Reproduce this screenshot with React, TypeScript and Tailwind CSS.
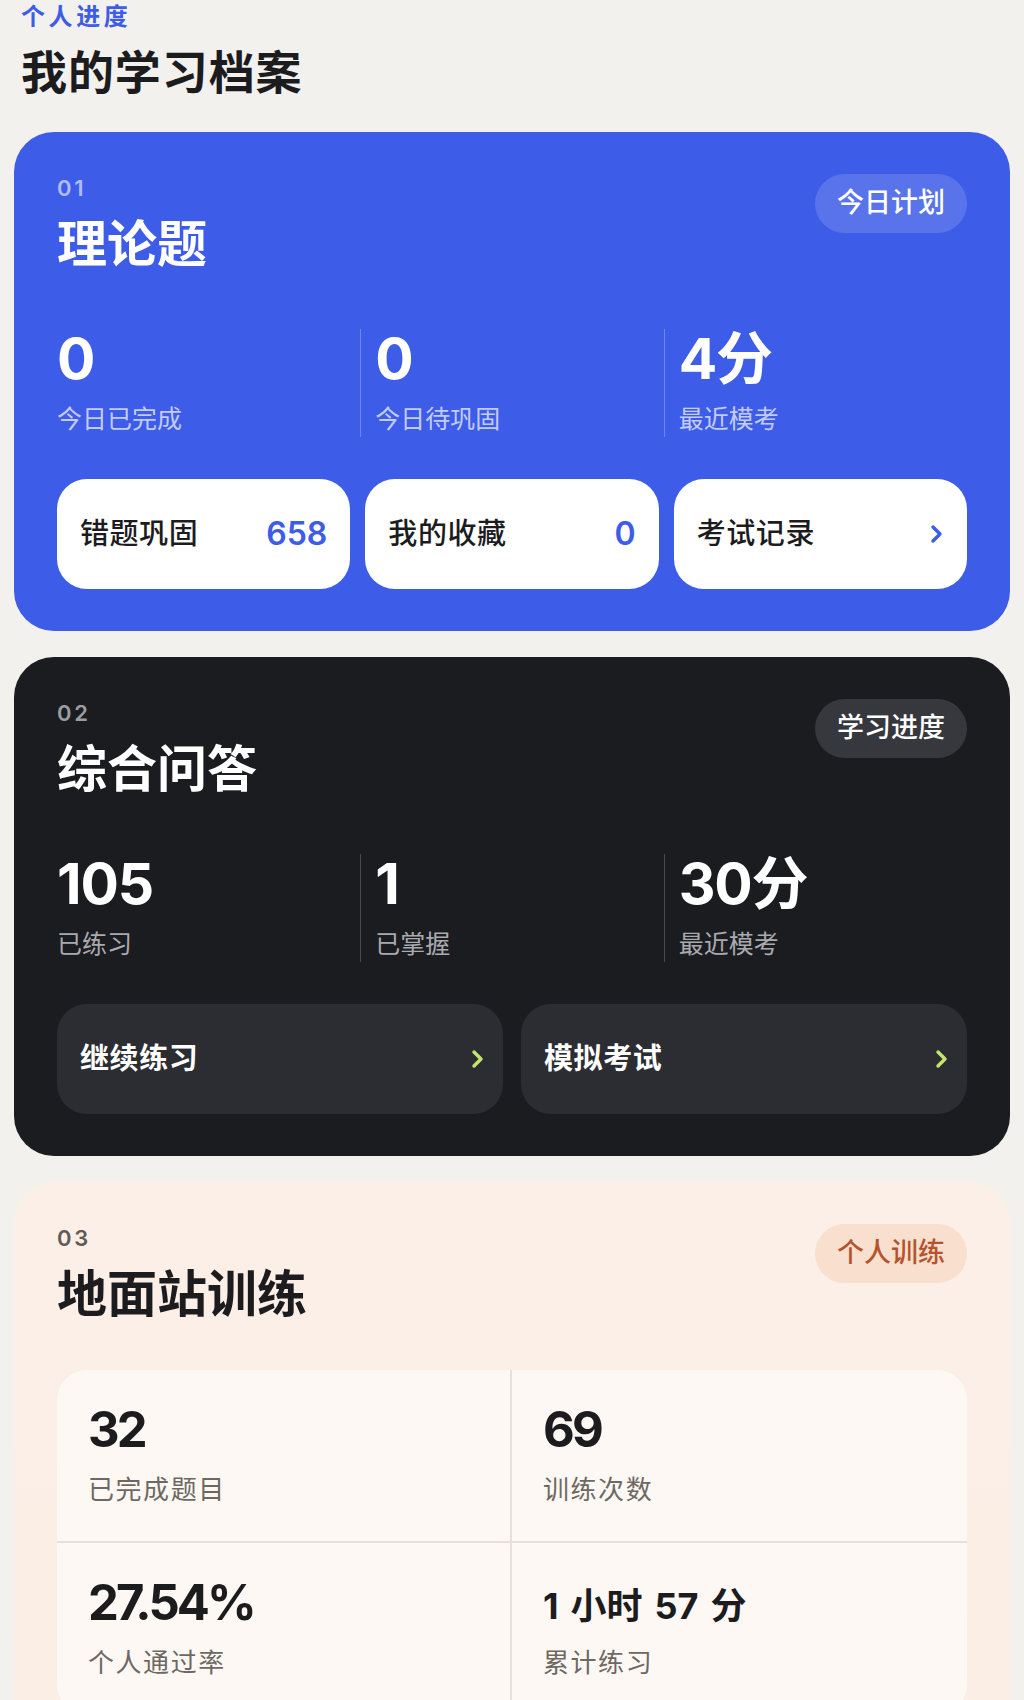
import type { ReactNode } from "react";

const font = { fontFamily: "Inter, 'Noto Sans CJK SC', sans-serif" };

function Chevron({ color }: { color: string }) {
  return (
    <svg width="16" height="26" viewBox="0 0 16 26" fill="none">
      <path d="M5 6l7 7-7 7" stroke={color} strokeWidth="3.4" strokeLinecap="round" strokeLinejoin="round" />
    </svg>
  );
}

type Stat = { value: string; label: string };

function StatRow({ stats, dark }: { stats: Stat[]; dark?: boolean }) {
  return (
    <div className="mt-[57px] grid grid-cols-3">
      {stats.map((s, i) => (
        <div
          key={i}
          className={
            i === 0
              ? "pb-[2px]"
              : dark
              ? "border-l border-white/20 pl-[14px] pb-[2px]"
              : "border-l border-white/25 pl-[14px] pb-[2px]"
          }
        >
          <div className="text-[57px] font-bold leading-[60px] text-white tracking-[-0.02em]">{s.value}</div>
          <div className={dark ? "mt-[14px] text-[25px] leading-[32px] text-[#a9aaaf]" : "mt-[14px] text-[25px] leading-[32px] text-white/70"}>
            {s.label}
          </div>
        </div>
      ))}
    </div>
  );
}

function CardHead({ num, title, badge, numClass, titleClass, badgeClass }: {
  num: string;
  title: string;
  badge: string;
  numClass: string;
  titleClass: string;
  badgeClass: string;
}) {
  return (
    <div className="flex items-start justify-between">
      <div>
        <div className={"text-[22px] font-semibold leading-[24px] tracking-[0.12em] " + numClass}>{num}</div>
        <div className={"mt-4 text-[50px] font-bold leading-[56px] " + titleClass}>{title}</div>
      </div>
      <div className={"-mt-[2px] flex h-[59px] items-center rounded-full px-[22px] text-[27px] font-medium " + badgeClass}>
        {badge}
      </div>
    </div>
  );
}

function Card({ className, children }: { className: string; children: ReactNode }) {
  return <div className={"rounded-[40px] px-[43px] pt-[44px] pb-[42px] " + className}>{children}</div>;
}

export default function App() {
  return (
    <div className="min-h-screen bg-[#f2f1ee] px-[14px] pb-10" style={font}>
      <div className="px-[7px] pt-[2px]">
        <div className="text-[24px] font-semibold leading-[30px] tracking-[0.15em] text-[#3d5ce8]">个人进度</div>
        <div className="mt-[12px] text-[46px] font-bold leading-[56px] tracking-[0.02em] text-[#1c1c1e]">我的学习档案</div>
      </div>

      <div className="mt-[32px] flex flex-col gap-[26px]">
        <Card className="bg-[#3d5ce8]">
          <CardHead
            num="01"
            title="理论题"
            badge="今日计划"
            numClass="text-white/60"
            titleClass="text-white"
            badgeClass="bg-white/15 text-white"
          />
          <StatRow
            stats={[
              { value: "0", label: "今日已完成" },
              { value: "0", label: "今日待巩固" },
              { value: "4分", label: "最近模考" },
            ]}
          />
          <div className="mt-[42px] grid grid-cols-3 gap-[15px]">
            {[
              { t: "错题巩固", v: "658" },
              { t: "我的收藏", v: "0" },
              { t: "考试记录", v: "" },
            ].map((b) => (
              <div key={b.t} className="flex h-[110px] items-center justify-between rounded-[30px] bg-white pl-[23px] pr-[23px]">
                <span className="text-[29px] font-medium tracking-[0.02em] text-[#1c1c1e]">{b.t}</span>
                {b.v ? (
                  <span className="text-[32px] font-semibold text-[#3d5ce8]">{b.v}</span>
                ) : (
                  <Chevron color="#3d5ce8" />
                )}
              </div>
            ))}
          </div>
        </Card>

        <Card className="bg-[#1b1c20]">
          <CardHead
            num="02"
            title="综合问答"
            badge="学习进度"
            numClass="text-[#9c9da2]"
            titleClass="text-white"
            badgeClass="bg-[#37383d] text-white"
          />
          <StatRow
            dark
            stats={[
              { value: "105", label: "已练习" },
              { value: "1", label: "已掌握" },
              { value: "30分", label: "最近模考" },
            ]}
          />
          <div className="mt-[42px] grid grid-cols-2 gap-[18px]">
            {["继续练习", "模拟考试"].map((t) => (
              <div key={t} className="flex h-[110px] items-center justify-between rounded-[30px] bg-[#2b2d33] pl-[23px] pr-[18px]">
                <span className="text-[29px] font-semibold tracking-[0.02em] text-white">{t}</span>
                <Chevron color="#c2e66a" />
              </div>
            ))}
          </div>
        </Card>

        <Card className="bg-gradient-to-b from-[#fcefe7] to-[#fbeee5]">
          <CardHead
            num="03"
            title="地面站训练"
            badge="个人训练"
            numClass="text-[#5e5a57]"
            titleClass="text-[#1c1c1e]"
            badgeClass="bg-[#f8dfce] text-[#b4532d]"
          />
          <div className="mt-[48px] grid grid-cols-2 overflow-hidden rounded-[30px] bg-[#fdf8f3]">
            {[
              { v: ["32"], l: "已完成题目" },
              { v: ["69"], l: "训练次数" },
              { v: ["27.54%"], l: "个人通过率" },
              { v: ["1", "小时", "57", "分"], l: "累计练习" },
            ].map((c, i) => (
              <div
                key={c.l}
                className={
                  (i % 2 === 0 ? "border-r-2 border-[#e8e0da] " : "") +
                  (i < 2 ? "border-b-2 border-[#e8e0da] " : "") +
                  "px-[31px] pt-[35px] pb-[35px]"
                }
              >
                {c.v.length === 1 ? (
                  <div className="h-[50px] text-[49px] font-bold leading-none tracking-[-0.06em] text-[#1c1c1e]">{c.v[0]}</div>
                ) : (
                  <div className="flex h-[50px] items-end gap-[12px] pb-[4px] text-[36px] font-bold leading-none text-[#1c1c1e]">
                    {c.v.map((p, k) => (
                      <span key={k}>{p}</span>
                    ))}
                  </div>
                )}
                <div className="mt-[19px] text-[26px] leading-[32px] tracking-[0.06em] text-[#6e6863]">{c.l}</div>
              </div>
            ))}
          </div>
        </Card>
      </div>
    </div>
  );
}
